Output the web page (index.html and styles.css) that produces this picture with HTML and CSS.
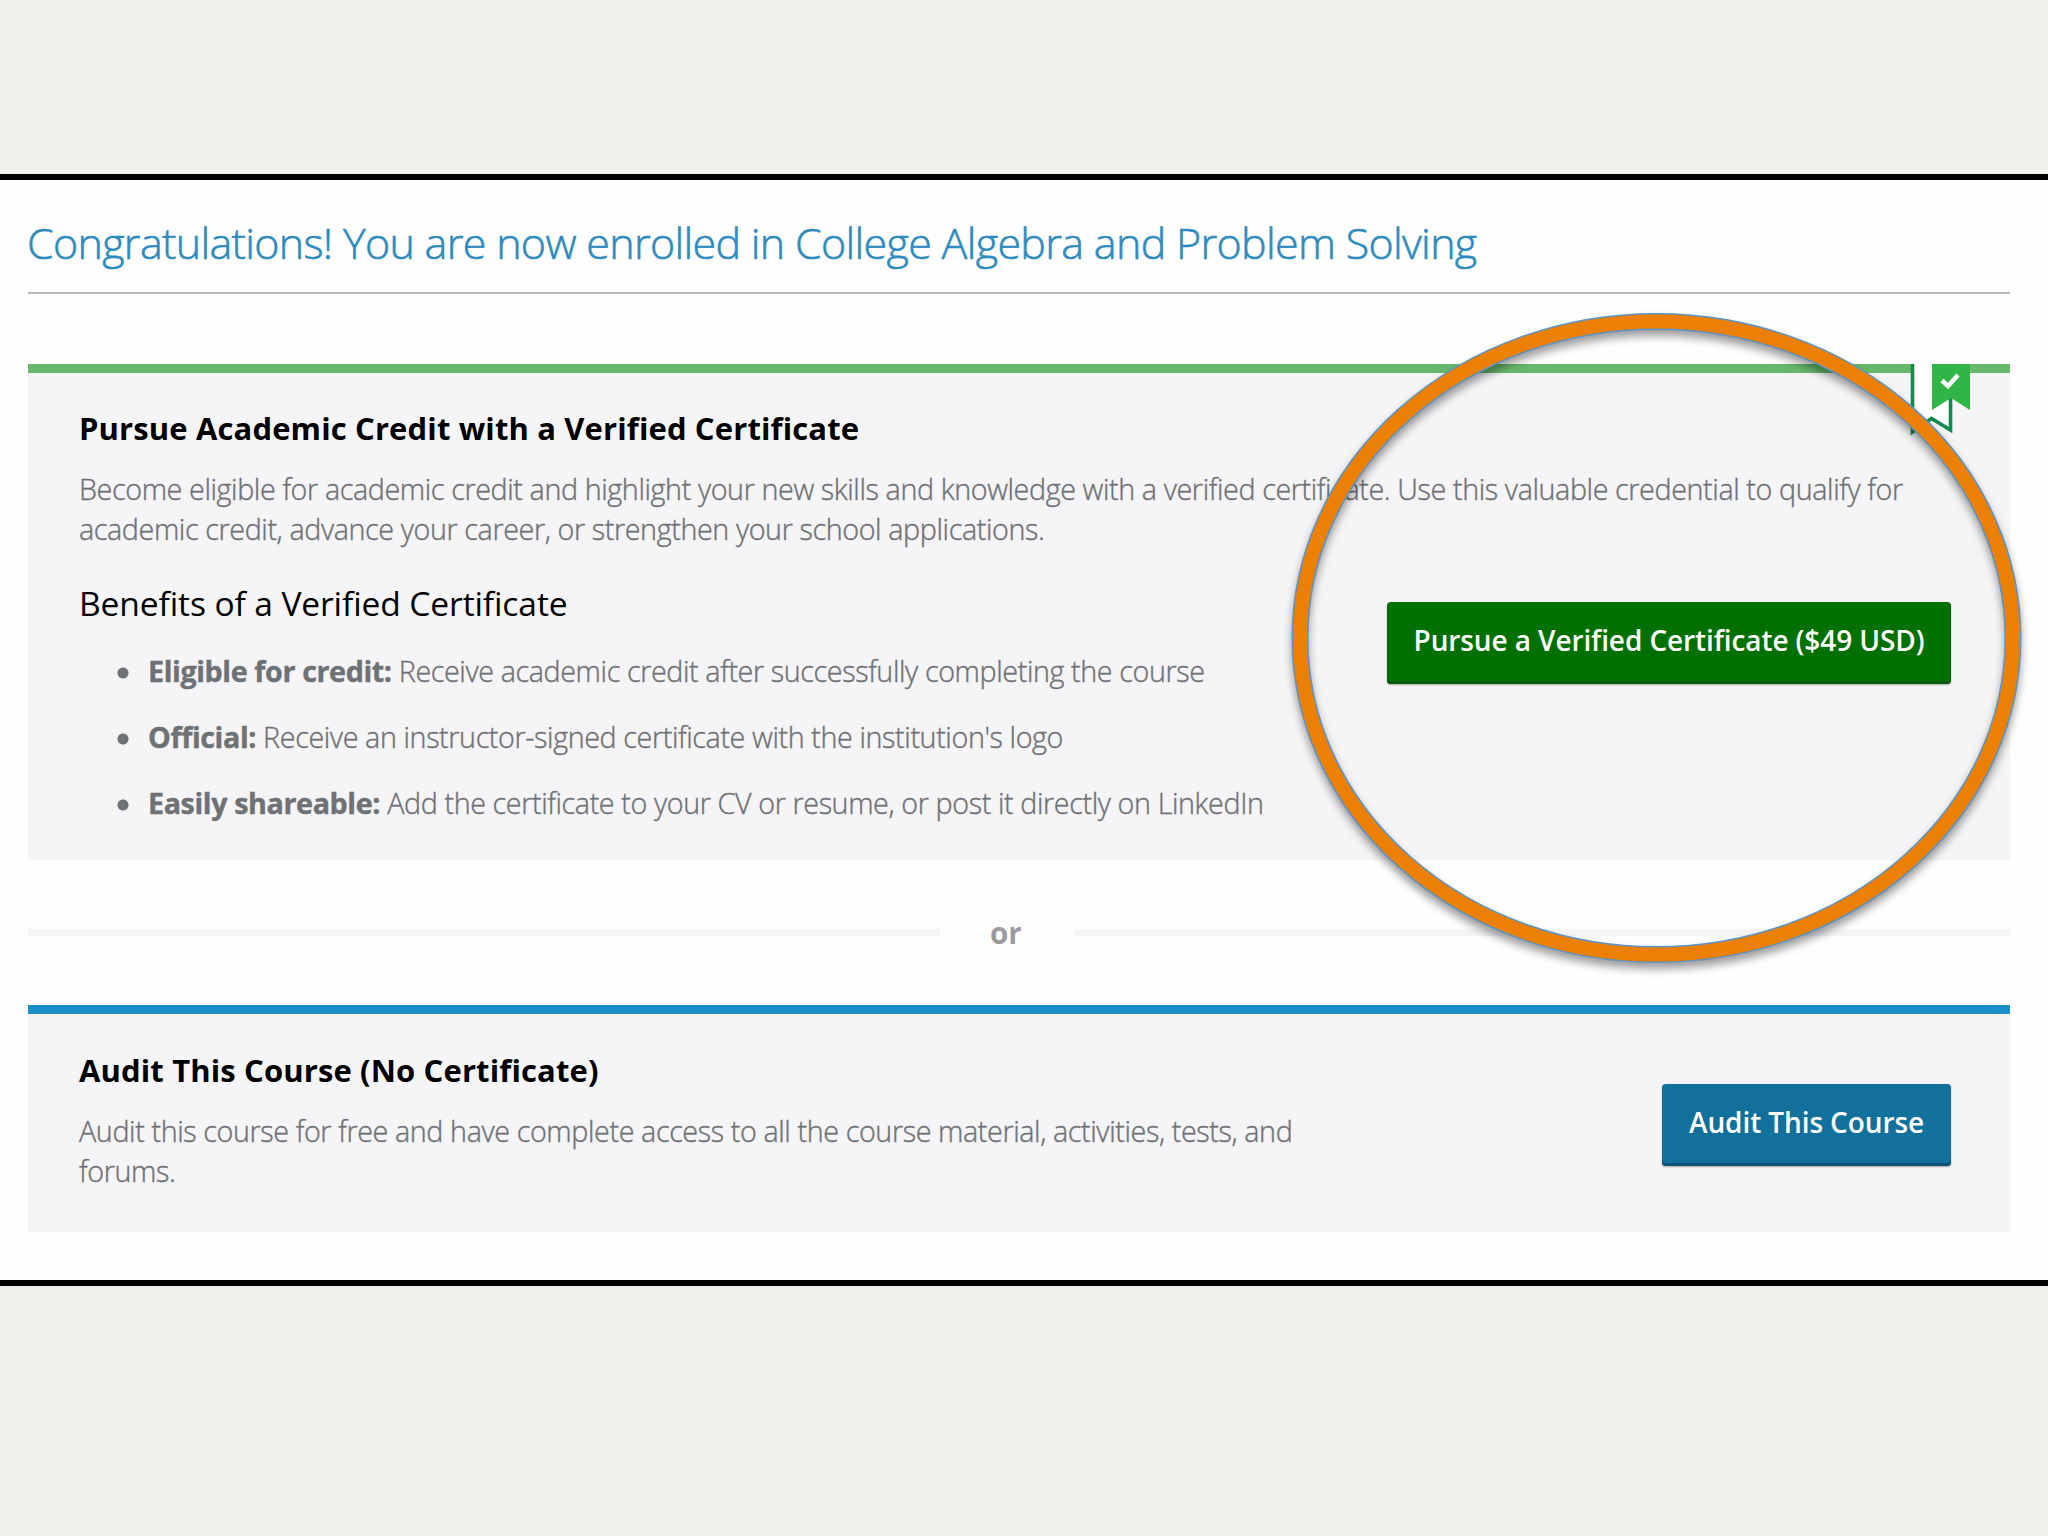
FILE: index.html
```html
<!DOCTYPE html>
<html lang="en">
<head>
  <meta charset="UTF-8">
  <meta name="viewport" content="width=device-width, initial-scale=1.0">
  <title>Choose Your Track</title>
  <link rel="stylesheet" href="styles.css">
</head>
<body>
<main class="page">
  <h1 class="page-title">Congratulations! You are now enrolled in College Algebra and Problem Solving</h1>

  <section class="panel panel-verified">
    <svg class="ribbon" width="62" height="72" viewBox="0 0 62 72">
      <path d="M4 0H42V66L21 54L4 66Z" fill="#ffffff"></path>
      <path d="M2.5 0V68L21.500 54.500L40.500 66V34" fill="none" stroke="#128a4a" stroke-width="3.600"></path>
      <path d="M22 0H60V46L41 34L22 46Z" fill="#32b548"></path>
      <path d="M32 16.500L38 22L48 11" fill="none" stroke="#ffffff" stroke-width="4.500"></path>
    </svg>
    <h2 class="panel-title">Pursue Academic Credit with a Verified Certificate</h2>
    <p class="copy">Become eligible for academic credit and highlight your new skills and knowledge with a verified certificate. Use this valuable credential to qualify for<br>academic credit, advance your career, or strengthen your school applications.</p>
    <div class="panel-row">
      <div class="benefits">
        <h3 class="benefits-title">Benefits of a Verified Certificate</h3>
        <ul class="benefits-list">
          <li><b>Eligible for credit:</b> Receive academic credit after successfully completing the course</li>
          <li><b>Official:</b> Receive an instructor-signed certificate with the institution's logo</li>
          <li><b>Easily shareable:</b> Add the certificate to your CV or resume, or post it directly on LinkedIn</li>
        </ul>
      </div>
      <button class="btn btn-verified">Pursue a Verified Certificate ($49 USD)</button>
    </div>
  </section>

  <div class="divider"><span>or</span></div>

  <section class="panel panel-audit">
    <div class="panel-row">
      <div class="audit-info">
        <h2 class="panel-title">Audit This Course (No Certificate)</h2>
        <p class="copy">Audit this course for free and have complete access to all the course material, activities, tests, and<br>forums.</p>
      </div>
      <button class="btn btn-audit">Audit This Course</button>
    </div>
  </section>

  <svg class="highlight" width="740" height="670" viewBox="0 0 740 670">
    <ellipse cx="369.500" cy="328" rx="356.500" ry="316.500" fill="none" stroke="#5b93c7" stroke-width="17"></ellipse>
    <ellipse cx="369.500" cy="328" rx="356.500" ry="316.500" fill="none" stroke="#ec8003" stroke-width="14"></ellipse>
  </svg>
</main>
</body>
</html>
```
FILE: styles.css
```css
* {
  margin: 0;
  padding: 0;
  box-sizing: border-box;
}

body {
  padding: 174px 0 250px;
  background-color: #f0f0eb;
  color: #6f7275;
  font-family: "Open Sans", "Noto Sans", sans-serif;
}

.page {
  position: relative;
  height: 1112px;
  padding: 33px 38px 0 27px;
  border-top: 6px solid #000;
  border-bottom: 6px solid #000;
  background-color: #fefefe;
}

.page-title {
  height: 81px;
  margin: 0 0 70px 1px;
  border-bottom: 2px solid #b9b8bd;
  color: #2e8bc0;
  font-size: 43px;
  font-weight: 300;
  line-height: 60px;
  letter-spacing: -0.69px;
  text-indent: -1px;
  white-space: nowrap;
  -webkit-text-stroke: 0.6px currentColor;
}

.panel {
  position: relative;
  margin-left: 1px;
  padding: 34px 59px 0 51px;
  border-top: 9px solid #67b86b;
  background-color: #f5f4f7;
}

.panel-verified {
  height: 496px;
}

.panel-audit {
  height: 227px;
  padding-top: 35px;
  border-top-color: #1a8ec6;
}

.panel-title {
  color: #000;
  font-size: 31px;
  font-weight: 700;
  line-height: 42px;
  letter-spacing: 0.13px;
  white-space: nowrap;
}

.copy,
.benefits-list {
  font-size: 28.7px;
  font-weight: 300;
  line-height: 40px;
  letter-spacing: -0.39px;
  white-space: nowrap;
  -webkit-text-stroke: 0.4px currentColor;
}

.copy {
  margin-top: 20px;
}

.panel-row {
  display: flex;
  align-items: flex-start;
  justify-content: space-between;
}

.benefits {
  margin-top: 31px;
}

.benefits-title {
  color: #000;
  font-size: 33.6px;
  font-weight: 400;
  line-height: 46px;
  letter-spacing: -0.12px;
  white-space: nowrap;
}

.benefits-list {
  display: flex;
  flex-direction: column;
  gap: 26px;
  margin-top: 25px;
  list-style: none;
}

.benefits-list li {
  padding-left: 69px;
  background: radial-gradient(circle at 44px 22px, #6f7275 5px, transparent 6px);
}

.benefits-list b {
  font-weight: 700;
}

.btn {
  flex-shrink: 0;
  height: 82px;
  padding-bottom: 6px;
  border: none;
  border-radius: 4px;
  color: #fff;
  font-family: inherit;
  font-size: 28px;
  font-weight: 600;
  letter-spacing: -0.1px;
  white-space: nowrap;
}

.btn-verified {
  width: 564px;
  margin-top: 53px;
  background-color: #007000;
  box-shadow: inset 0 -3px 0 #045c08, 0 1px 2px rgba(0, 0, 0, 0.3);
}

.btn-audit {
  width: 289px;
  margin-top: 35px;
  background-color: #12709c;
  box-shadow: inset 0 -3px 0 #0d5278, 0 1px 2px rgba(0, 0, 0, 0.3);
}

.divider {
  display: flex;
  align-items: center;
  height: 145px;
  margin-left: 1px;
  color: #9b9a9d;
  font-size: 29.5px;
  font-weight: 700;
}

.divider::before,
.divider::after {
  content: "";
  height: 7px;
  background-color: #f5f4f7;
}

.divider::before {
  width: 912px;
}

.divider::after {
  flex: 1;
}

.divider span {
  width: 134px;
  padding: 1px 0 0 50px;
  line-height: 40px;
}

/* overlays */
.ribbon {
  position: absolute;
  top: -9px;
  right: 38px;
}

.highlight {
  position: absolute;
  top: 130px;
  left: 1287px;
  filter: drop-shadow(0 6px 4px rgba(0, 0, 0, 0.38));
}
```
